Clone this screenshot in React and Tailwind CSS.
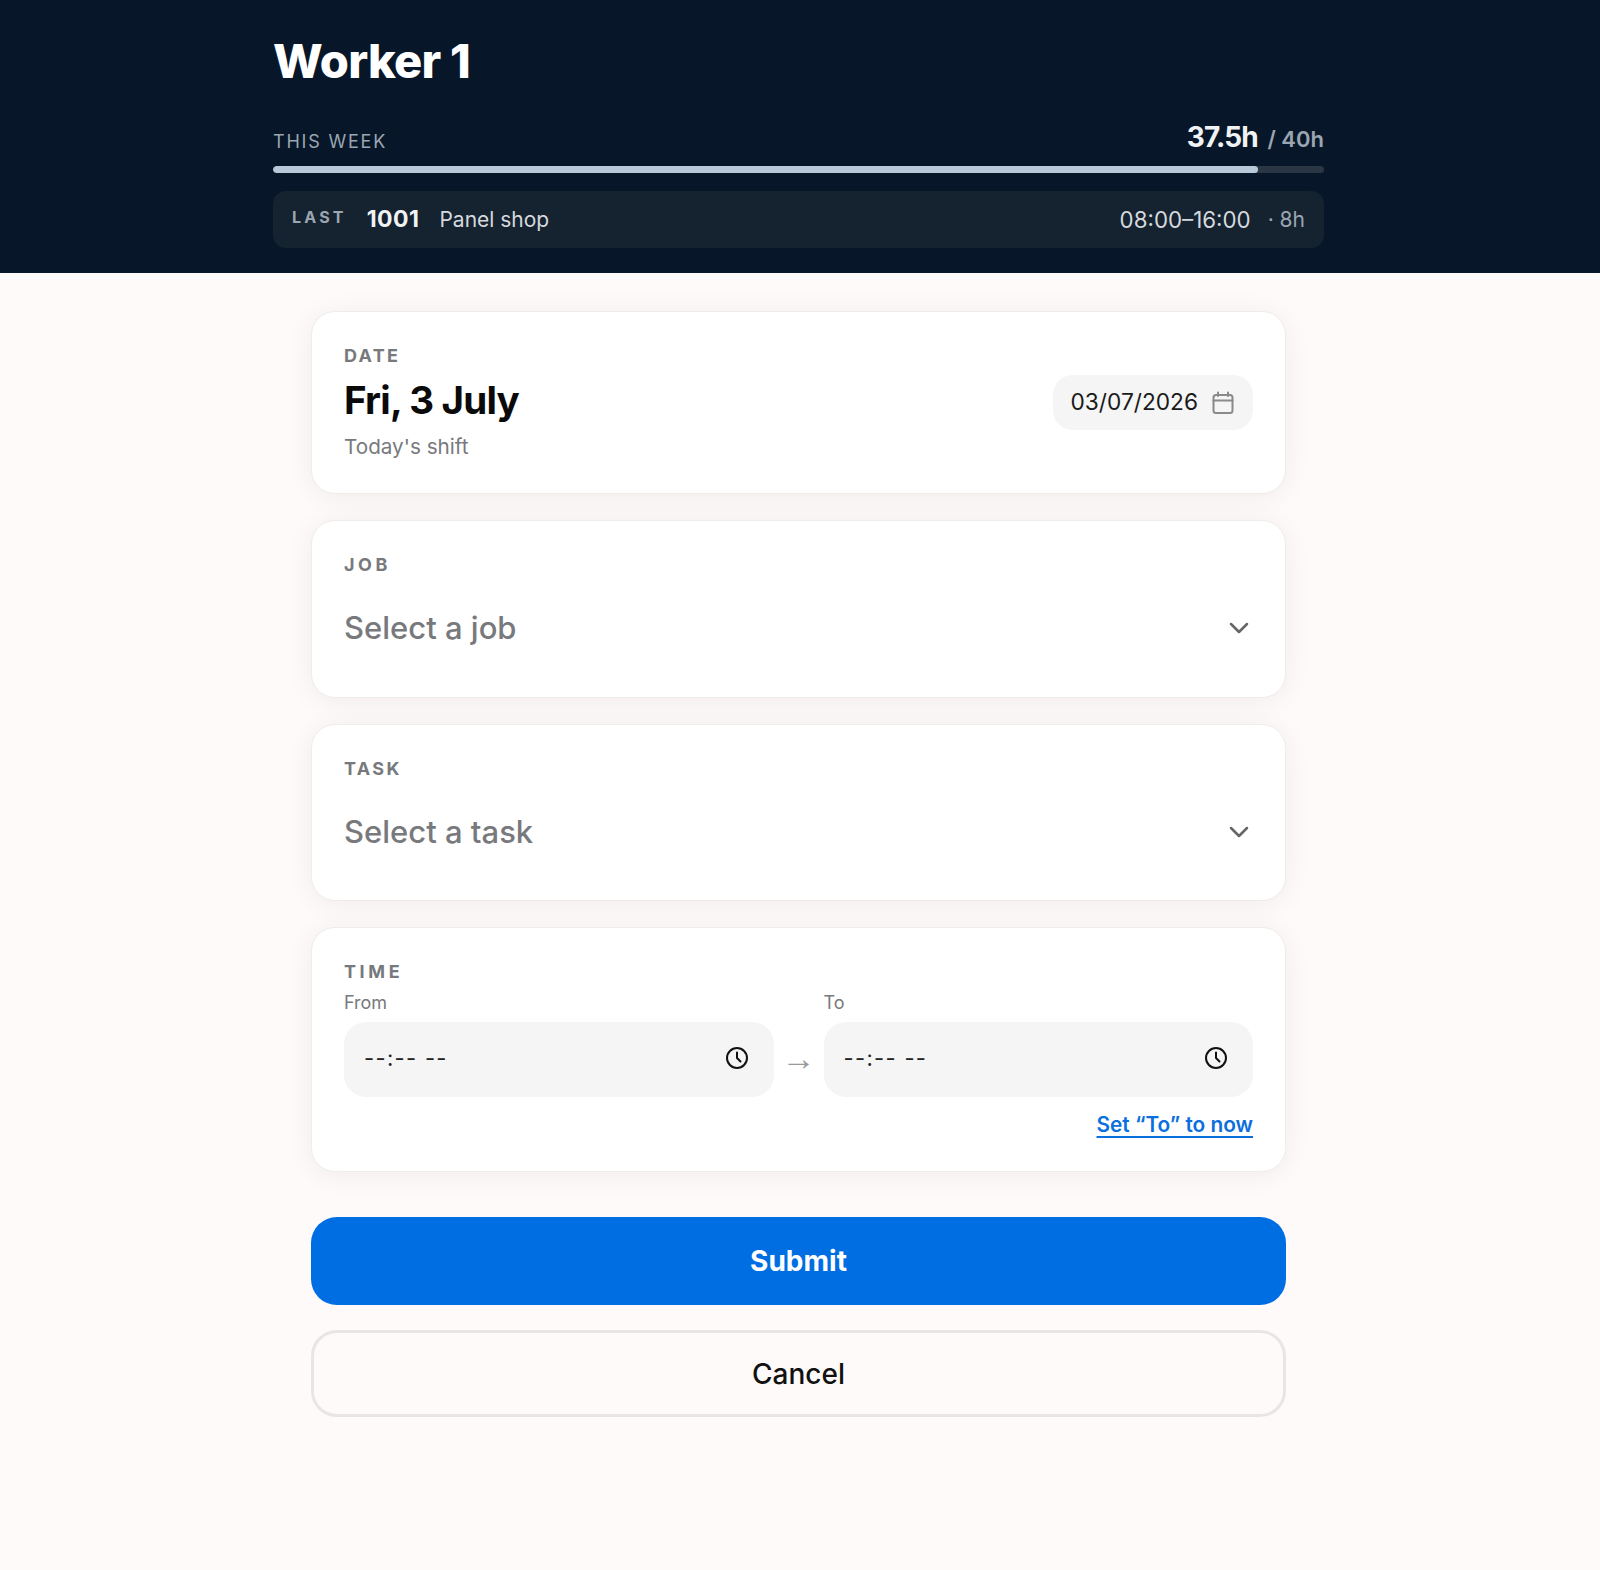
import React from "react";
import { ChevronDown } from "lucide-react";

const font = { fontFamily: "Inter, 'Liberation Sans', sans-serif" };

// small uppercase label at the top of each card
const CardLabel = ({ children, wide }) => (
  <div className={`text-[18px] leading-[22px] font-bold text-[#77797c] ${wide ? "tracking-[0.2em]" : "tracking-[0.13em]"}`}>
    {children}
  </div>
);

const Card = ({ className, children }) => (
  <div className={`bg-white rounded-[24px] border border-[#efecea] shadow-[0_3px_28px_rgba(70,20,20,0.06)] px-[32px] ${className}`}>
    {children}
  </div>
);

const ClockIcon = () => (
  <svg width="24" height="24" viewBox="0 0 24 24" fill="none" stroke="#111" strokeWidth="2" strokeLinecap="round" strokeLinejoin="round">
    <circle cx="12" cy="12" r="10" />
    <path d="M12 6.5V12l3.5 3.5" />
  </svg>
);

const CalendarIcon = () => (
  <svg width="22" height="24" viewBox="0 0 22 24" fill="none" stroke="#8a8a8a" strokeWidth="2" strokeLinecap="round" strokeLinejoin="round">
    <rect x="1.5" y="4" width="19" height="18" rx="2.5" />
    <path d="M6 1.5V5M16 1.5V5M1.5 9.5h19" />
  </svg>
);

const TimeField = ({ label }) => (
  <div className="flex-1">
    <div className="text-[18px] leading-[22px] text-[#77797c] mb-[8px]">{label}</div>
    <div className="h-[75px] rounded-[22px] bg-[#f5f5f5] flex items-center justify-between pl-[20px] pr-[25px] pb-[3px]">
      <span className="text-[22px] text-[#222] tracking-[0.06em]">--:-- --</span>
      <ClockIcon />
    </div>
  </div>
);

const SelectCard = ({ label, placeholder, wide, className }) => (
  <Card className={`pt-[33px] ${className}`}>
    <CardLabel wide={wide}>{label}</CardLabel>
    <div className="flex items-center justify-between mt-[30px] h-[44px]">
      <span className="text-[31px] font-medium text-[#77797c]">{placeholder}</span>
      <ChevronDown size={32} strokeWidth={1.9} className="text-[#666] mr-[-2px]" />
    </div>
  </Card>
);

export default function App() {
  return (
    <div style={font} className="min-h-screen bg-[#fdfaf9]">
      <header className="bg-[#071729] h-[273px] pt-[35px] pr-[3px]">
        <div className="w-[1051px] mx-auto">
          <h1 className="text-[47px] leading-[52px] font-extrabold text-white tracking-[-0.015em]">Worker 1</h1>

          <div className="flex justify-between items-end h-[32px] mt-[39px]">
            <span className="text-[18px] text-[#9ba6b1] tracking-[0.1em] leading-[24px] mb-[4px]">THIS WEEK</span>
            <span className="text-[22px] text-[#9ba6b1] font-semibold">
              <span className="text-[28px] font-bold text-[#f0f2f4] tracking-[-0.03em] mr-[4px]">37.5h</span> / 40h
            </span>
          </div>

          <div className="h-[7px] rounded-full bg-[#2a3644] mt-[8px] overflow-hidden">
            <div className="h-full rounded-full bg-[#b8c8d8] w-[93.75%]" />
          </div>

          <div className="h-[57px] mt-[18px] rounded-[13px] bg-[#15222f] flex items-center justify-between px-[19px]">
            <div className="flex items-center">
              <span className="text-[16px] font-bold text-[#9ba6b1] tracking-[0.2em] mr-[20px] mb-[5px]">LAST</span>
              <span className="text-[23px] font-bold text-[#f0f2f4] tracking-[0.02em] mr-[20px]">1001</span>
              <span className="text-[21px] text-[#d5d9de]">Panel shop</span>
            </div>
            <div className="flex items-center">
              <span className="text-[22.3px] text-[#d5d9de] mr-[17px]">08:00–16:00</span>
              <span className="text-[21px] text-[#9ba6b1]">· 8h</span>
            </div>
          </div>
        </div>
      </header>

      <div className="pr-[3px]">
        <main className="w-[975px] mx-auto pt-[38px] flex flex-col gap-[26px]">
          <Card className="h-[183px] flex items-center justify-between">
            <div className="pt-[2px]">
              <CardLabel>DATE</CardLabel>
              <div className="text-[38.5px] leading-[46px] mt-[10px] font-bold text-[#0a0a0a] tracking-[-0.02em]">Fri, 3 July</div>
              <div className="text-[20.7px] leading-[30px] mt-[9px] text-[#77797c]">Today's shift</div>
            </div>
            <div className="h-[55px] rounded-[20px] bg-[#f5f5f5] flex items-center gap-[14px] pl-[18px] pr-[19px]">
              <span className="text-[22.7px] text-[#1a1a1a]">03/07/2026</span>
              <CalendarIcon />
            </div>
          </Card>

          <SelectCard label="JOB" placeholder="Select a job" wide className="h-[178px]" />
          <SelectCard label="TASK" placeholder="Select a task" className="h-[177px]" />

          <Card className="h-[245px] pt-[33px]">
            <CardLabel wide>TIME</CardLabel>
            <div className="flex items-end gap-[8px] mt-[9px]">
              <TimeField label="From" />
              <span className="w-[34px] text-[#999] text-[34px] leading-[75px] -translate-y-[1px] font-['Liberation_Sans']">→</span>
              <TimeField label="To" />
            </div>
            <div className="flex justify-end mt-[12px]">
              <a href="#" className="text-[20.8px] font-semibold text-[#0b6fdd] underline underline-offset-4">
                Set “To” to now
              </a>
            </div>
          </Card>

          <button className="mt-[19px] h-[88px] rounded-[26px] bg-[#006ee3] text-white text-[28px] font-bold">Submit</button>
          <button className="h-[87px] -mt-[1px] rounded-[26px] border-[3px] border-[#e8e6e5] text-[#111] text-[28px] font-medium">Cancel</button>
        </main>
      </div>
    </div>
  );
}
